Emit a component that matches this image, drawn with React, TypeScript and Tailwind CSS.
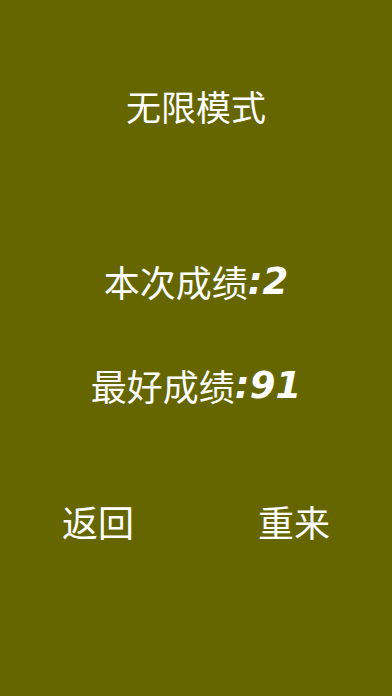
const cjk = { fontFamily: '"Noto Sans CJK SC", "Noto Sans", sans-serif' }

function ScoreLine({ label, value }: { label: string; value: number }) {
  return (
    <div className="flex h-10 items-center justify-center text-[36px] leading-none text-white">
      <span style={cjk}>{label}</span>
      <span className="text-[37px] font-bold italic" style={{ fontFamily: '"DejaVu Sans", sans-serif' }}>
        :{value}
      </span>
    </div>
  )
}

export default function App() {
  return (
    <div className="flex h-[696px] w-full flex-col bg-[#666600] pt-[85px] text-white" style={cjk}>
      <h1 className="flex h-10 items-center justify-center text-[35px] font-normal leading-none">
        无限模式
      </h1>

      <div className="mt-[136px]">
        <ScoreLine label="本次成绩" value={2} />
      </div>
      <div className="mt-[64px]">
        <ScoreLine label="最好成绩" value={91} />
      </div>

      <div className="mt-[96px] grid h-10 grid-cols-2 items-center text-[36px] leading-none">
        <button className="text-center text-white">返回</button>
        <button className="text-center text-white">重来</button>
      </div>
    </div>
  )
}
